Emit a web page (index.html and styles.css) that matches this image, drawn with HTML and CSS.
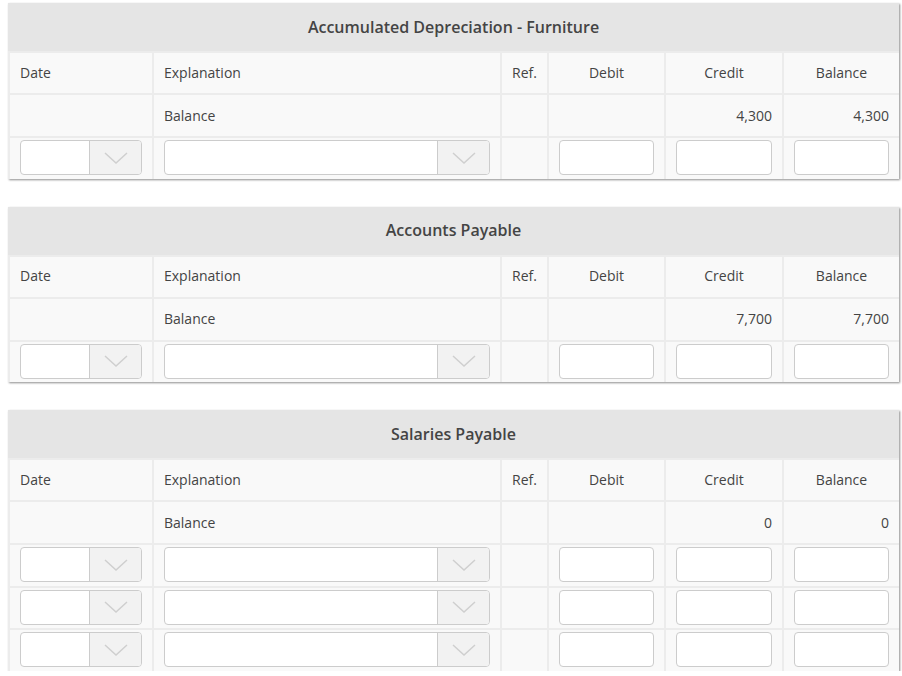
FILE: index.html
```html
<!DOCTYPE html>
<html lang="en">
<head>
<meta charset="utf-8">
<title>Ledger accounts</title>
<link rel="stylesheet" href="styles.css">
</head>
<body>
<div class="page">

  <section class="ledger">
    <div class="ledger-title">Accumulated Depreciation - Furniture</div>
    <div class="ledger-grid">
      <div class="cell head left">Date</div>
      <div class="cell head left">Explanation</div>
      <div class="cell head">Ref.</div>
      <div class="cell head">Debit</div>
      <div class="cell head">Credit</div>
      <div class="cell head">Balance</div>

      <div class="cell"></div>
      <div class="cell left">Balance</div>
      <div class="cell"></div>
      <div class="cell num"></div>
      <div class="cell num">4,300</div>
      <div class="cell num">4,300</div>

      <div class="cell input-cell"><div class="select"><span class="select-value"></span><span class="select-btn"><svg width="24" height="12" viewBox="0 0 24 12"><polyline points="1,1 12,11 23,1" /></svg></span></div></div>
      <div class="cell input-cell"><div class="select"><span class="select-value"></span><span class="select-btn"><svg width="24" height="12" viewBox="0 0 24 12"><polyline points="1,1 12,11 23,1" /></svg></span></div></div>
      <div class="cell input-cell"></div>
      <div class="cell input-cell"><input class="field" type="text"></div>
      <div class="cell input-cell"><input class="field" type="text"></div>
      <div class="cell input-cell"><input class="field" type="text"></div>
    </div>
  </section>

  <section class="ledger">
    <div class="ledger-title">Accounts Payable</div>
    <div class="ledger-grid">
      <div class="cell head left">Date</div>
      <div class="cell head left">Explanation</div>
      <div class="cell head">Ref.</div>
      <div class="cell head">Debit</div>
      <div class="cell head">Credit</div>
      <div class="cell head">Balance</div>

      <div class="cell"></div>
      <div class="cell left">Balance</div>
      <div class="cell"></div>
      <div class="cell num"></div>
      <div class="cell num">7,700</div>
      <div class="cell num">7,700</div>

      <div class="cell input-cell"><div class="select"><span class="select-value"></span><span class="select-btn"><svg width="24" height="12" viewBox="0 0 24 12"><polyline points="1,1 12,11 23,1" /></svg></span></div></div>
      <div class="cell input-cell"><div class="select"><span class="select-value"></span><span class="select-btn"><svg width="24" height="12" viewBox="0 0 24 12"><polyline points="1,1 12,11 23,1" /></svg></span></div></div>
      <div class="cell input-cell"></div>
      <div class="cell input-cell"><input class="field" type="text"></div>
      <div class="cell input-cell"><input class="field" type="text"></div>
      <div class="cell input-cell"><input class="field" type="text"></div>
    </div>
  </section>

  <section class="ledger">
    <div class="ledger-title">Salaries Payable</div>
    <div class="ledger-grid">
      <div class="cell head left">Date</div>
      <div class="cell head left">Explanation</div>
      <div class="cell head">Ref.</div>
      <div class="cell head">Debit</div>
      <div class="cell head">Credit</div>
      <div class="cell head">Balance</div>

      <div class="cell"></div>
      <div class="cell left">Balance</div>
      <div class="cell"></div>
      <div class="cell num"></div>
      <div class="cell num">0</div>
      <div class="cell num">0</div>

      <div class="cell input-cell"><div class="select"><span class="select-value"></span><span class="select-btn"><svg width="24" height="12" viewBox="0 0 24 12"><polyline points="1,1 12,11 23,1" /></svg></span></div></div>
      <div class="cell input-cell"><div class="select"><span class="select-value"></span><span class="select-btn"><svg width="24" height="12" viewBox="0 0 24 12"><polyline points="1,1 12,11 23,1" /></svg></span></div></div>
      <div class="cell input-cell"></div>
      <div class="cell input-cell"><input class="field" type="text"></div>
      <div class="cell input-cell"><input class="field" type="text"></div>
      <div class="cell input-cell"><input class="field" type="text"></div>

      <div class="cell input-cell"><div class="select"><span class="select-value"></span><span class="select-btn"><svg width="24" height="12" viewBox="0 0 24 12"><polyline points="1,1 12,11 23,1" /></svg></span></div></div>
      <div class="cell input-cell"><div class="select"><span class="select-value"></span><span class="select-btn"><svg width="24" height="12" viewBox="0 0 24 12"><polyline points="1,1 12,11 23,1" /></svg></span></div></div>
      <div class="cell input-cell"></div>
      <div class="cell input-cell"><input class="field" type="text"></div>
      <div class="cell input-cell"><input class="field" type="text"></div>
      <div class="cell input-cell"><input class="field" type="text"></div>

      <div class="cell input-cell"><div class="select"><span class="select-value"></span><span class="select-btn"><svg width="24" height="12" viewBox="0 0 24 12"><polyline points="1,1 12,11 23,1" /></svg></span></div></div>
      <div class="cell input-cell"><div class="select"><span class="select-value"></span><span class="select-btn"><svg width="24" height="12" viewBox="0 0 24 12"><polyline points="1,1 12,11 23,1" /></svg></span></div></div>
      <div class="cell input-cell"></div>
      <div class="cell input-cell"><input class="field" type="text"></div>
      <div class="cell input-cell"><input class="field" type="text"></div>
      <div class="cell input-cell"><input class="field" type="text"></div>
    </div>
  </section>

</div>
</body>
</html>
```

FILE: styles.css
```css
* {
  box-sizing: border-box;
}

html, body {
  margin: 0;
  padding: 0;
  background: #ffffff;
}

body {
  font-family: "Open Sans", "Liberation Sans", Arial, sans-serif;
  font-size: 14px;
  color: #444444;
}

.page {
  padding: 3px 0 0 8px;
  display: flex;
  flex-direction: column;
  gap: 28px;
}

.ledger {
  width: 891px;
  background: #ececec;
  box-shadow: 1px 1px 2px rgba(0, 0, 0, 0.45);
}

.ledger-title {
  height: 48px;
  background: #e5e5e5;
  display: flex;
  align-items: center;
  justify-content: center;
  font-size: 16px;
  font-weight: 600;
  color: #444444;
  padding-bottom: 1px;
}

.ledger-grid {
  display: grid;
  grid-template-columns: 142px 346px 45px 115px 116px 115px;
  grid-template-rows: 40px 41px;
  grid-auto-rows: 40.5px;
  gap: 2px;
  padding: 2px 0 0 2px;
  background: #ececec;
}

.cell {
  background: #f9f9f9;
  display: flex;
  align-items: center;
  justify-content: center;
  padding: 0 10px 1px;
  color: #444444;
}

.cell.head {
  padding-bottom: 2px;
}

.cell.left {
  justify-content: flex-start;
}

.cell.num {
  justify-content: flex-end;
}

.cell.input-cell {
  justify-content: stretch;
  align-items: flex-start;
  padding: 2px 10px 0;
}

.field {
  width: 100%;
  height: 35px;
  border: 1px solid #cccccc;
  border-radius: 4px;
  background: #ffffff;
  font-family: inherit;
  font-size: 14px;
  padding: 0 8px;
  margin: 0;
  outline: none;
}

.select {
  width: 100%;
  height: 35px;
  border: 1px solid #cccccc;
  border-radius: 4px;
  background: #ffffff;
  display: flex;
  overflow: hidden;
}

.select-value {
  flex: 1;
}

.select-btn {
  width: 52px;
  background: #f2f2f2;
  border-left: 1px solid #cccccc;
  display: flex;
  align-items: center;
  justify-content: center;
}

.select-btn svg polyline {
  fill: none;
  stroke: #cfcfcf;
  stroke-width: 1.5;
}
```
